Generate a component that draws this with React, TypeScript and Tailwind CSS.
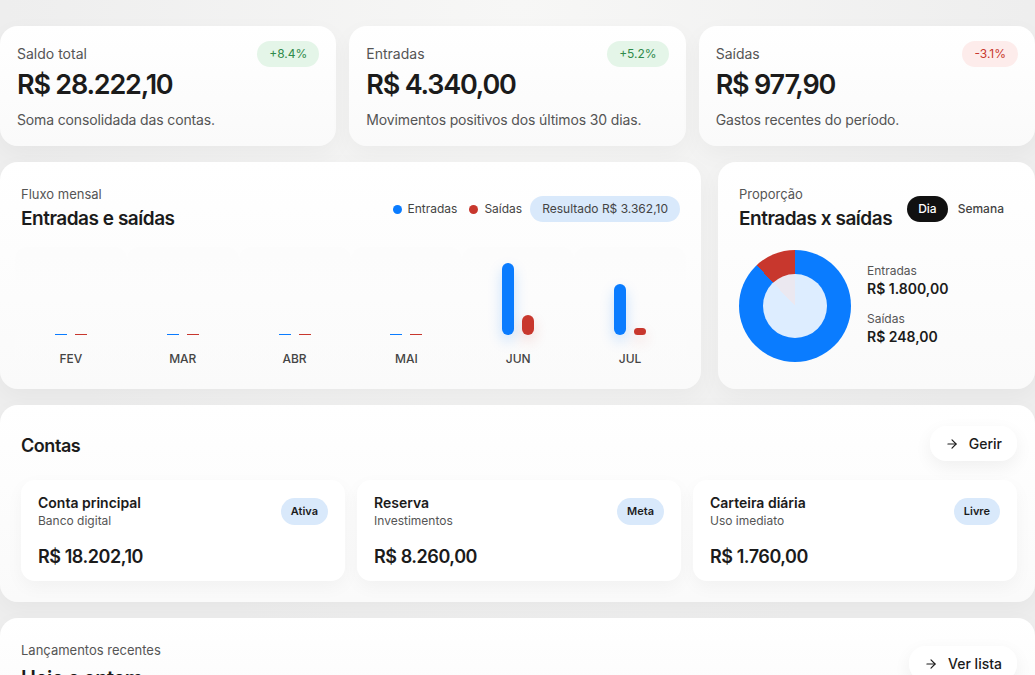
import { ArrowRight } from "lucide-react"

const font = { fontFamily: "Inter, 'Noto Sans', sans-serif" }

const stats = [
    { label: "Saldo total", value: "R$ 28.222,10", note: "Soma consolidada das contas.", badge: "+8.4%", up: true },
    { label: "Entradas", value: "R$ 4.340,00", note: "Movimentos positivos dos últimos 30 dias.", badge: "+5.2%", up: true },
    { label: "Saídas", value: "R$ 977,90", note: "Gastos recentes do período.", badge: "-3.1%", up: false },
]

const months = [
    { m: "FEV", inH: 0, outH: 0 },
    { m: "MAR", inH: 0, outH: 0 },
    { m: "ABR", inH: 0, outH: 0 },
    { m: "MAI", inH: 0, outH: 0 },
    { m: "JUN", inH: 72, outH: 20 },
    { m: "JUL", inH: 51, outH: 7 },
]

const accounts = [
    { name: "Conta principal", sub: "Banco digital", value: "R$ 18.202,10", tag: "Ativa" },
    { name: "Reserva", sub: "Investimentos", value: "R$ 8.260,00", tag: "Meta" },
    { name: "Carteira diária", sub: "Uso imediato", value: "R$ 1.760,00", tag: "Livre" },
]

function Bar({ h, color }: { h: number; color: "blue" | "red" }) {
    const base = color === "blue" ? "bg-[#0a7cff]" : "bg-[#c8372d]"
    if (h === 0) {
        return <div className={`h-[1.5px] w-3 ${base}`} />
    }
    return (
        <div
            className={`w-3 rounded-full ${base} ${color === "blue" ? "shadow-[0_6px_14px_rgba(10,124,255,0.22)]" : "shadow-[0_6px_14px_rgba(200,55,45,0.18)]"}`}
            style={{ height: h }}
        />
    )
}

export default function App() {
    return (
        <div
            className="min-h-screen w-[1035px] overflow-hidden bg-[#eeeeee] bg-[radial-gradient(ellipse_at_top,#f7f7f6_0%,#eeeeee_70%)] text-[#1b1b1b]"
            style={font}
        >
            <div className="flex flex-col gap-4 pt-[26px]">
                {/* stat cards */}
                <div className="grid grid-cols-3 gap-[13px]">
                    {stats.map((s) => (
                        <div
                            key={s.label}
                            className="h-[120px] rounded-[18px] bg-gradient-to-b from-white to-[#fafafa] px-[17px] pt-[15px] shadow-[0_8px_24px_rgba(0,0,0,0.04)]"
                        >
                            <div className="flex items-start justify-between">
                                <span className="mt-[3px] text-sm text-[#555]">{s.label}</span>
                                <span
                                    className={`rounded-full px-3 py-[5px] text-xs ${s.up ? "bg-[#e4f5e8] text-[#2f8a4a]" : "bg-[#fdeceb] text-[#c8372d]"}`}
                                >
                                    {s.badge}
                                </span>
                            </div>
                            <div className="mt-[4px] text-[27px] font-semibold leading-none tracking-[-0.045em]">{s.value}</div>
                            <div className="mt-[12px] text-sm tracking-[-0.01em] text-[#555]">{s.note}</div>
                        </div>
                    ))}
                </div>

                {/* charts */}
                <div className="grid grid-cols-[701px_1fr] gap-[17px]">
                    <div className="h-[227px] rounded-[18px] bg-gradient-to-b from-white to-[#fafafa] px-[21px] pt-[23px] shadow-[0_8px_24px_rgba(0,0,0,0.04)]">
                        <div className="flex items-start justify-between">
                            <div>
                                <div className="text-[13px] text-[#555]">Fluxo mensal</div>
                                <div className="text-[19px] font-semibold tracking-tight">Entradas e saídas</div>
                            </div>
                            <div className="mt-[11px] flex items-center gap-2 text-xs text-[#444]">
                                <span className="flex items-center gap-[6px]">
                                    <span className="size-[9px] rounded-full bg-[#0a7cff]" />
                                    Entradas
                                </span>
                                <span className="ml-1 flex items-center gap-[6px]">
                                    <span className="size-[9px] rounded-full bg-[#c8372d]" />
                                    Saídas
                                </span>
                                <span className="rounded-full bg-[#d9e9fb] px-3 py-[5px] text-[#444]">
                                    Resultado R$ 3.362,10
                                </span>
                            </div>
                        </div>
                        <div className="-mx-[6px] mt-[14px] grid grid-cols-6">
                            {months.map((c) => (
                                <div key={c.m} className="flex h-[128px] flex-col items-center rounded-xl bg-gradient-to-b from-[#fcfcfc] to-transparent">
                                    <div className="flex h-[88px] items-end gap-2">
                                        <Bar h={c.inH} color="blue" />
                                        <Bar h={c.outH} color="red" />
                                    </div>
                                    <div className="mt-[16px] text-xs font-medium text-[#444]">{c.m}</div>
                                </div>
                            ))}
                        </div>
                    </div>

                    <div className="h-[227px] rounded-[18px] bg-gradient-to-b from-white to-[#fafafa] px-[21px] pt-[23px] shadow-[0_8px_24px_rgba(0,0,0,0.04)]">
                        <div className="flex items-start gap-[15px]">
                            <div>
                                <div className="text-[13px] text-[#555]">Proporção</div>
                                <div className="text-[19px] font-semibold tracking-tight">Entradas x saídas</div>
                            </div>
                            <div className="mt-[11px] flex items-center gap-[10px] text-xs font-medium">
                                <span className="rounded-full bg-[#111] px-[11px] py-[5px] text-white">Dia</span>
                                <span className="text-[#444]">Semana</span>
                            </div>
                        </div>
                        <div className="mt-[17px] flex items-center gap-4">
                            <div className="flex size-[112px] items-center justify-center rounded-full bg-[conic-gradient(#0a7cff_0_88%,#c8372d_88%_100%)]">
                                <div className="size-[64px] rounded-full bg-[#eef5ff]/[0.93]" />
                            </div>
                            <div className="-mt-[2px] flex flex-col">
                                <span className="text-xs text-[#555]">Entradas</span>
                                <span className="text-sm font-semibold">R$ 1.800,00</span>
                                <span className="mt-[12px] text-xs text-[#555]">Saídas</span>
                                <span className="text-sm font-semibold">R$ 248,00</span>
                            </div>
                        </div>
                    </div>
                </div>

                {/* accounts */}
                <div className="h-[197px] rounded-[18px] bg-gradient-to-b from-white to-[#fafafa] pl-[21px] pr-[18px] pt-[21px] shadow-[0_8px_24px_rgba(0,0,0,0.04)]">
                    <div className="flex items-center justify-between">
                        <div className="mt-[4px] text-lg font-semibold tracking-tight">Contas</div>
                        <button className="flex h-[35px] items-center gap-[10px] rounded-2xl bg-white px-[15px] text-sm font-medium shadow-[0_6px_18px_rgba(0,0,0,0.06)]">
                            <ArrowRight className="size-[14px]" strokeWidth={2} />
                            Gerir
                        </button>
                    </div>
                    <div className="mt-[19px] grid grid-cols-3 gap-3">
                        {accounts.map((a) => (
                            <div key={a.name} className="h-[101px] rounded-[14px] bg-white px-[17px] pt-[13px] shadow-[0_6px_18px_rgba(0,0,0,0.04)]">
                                <div className="flex items-start justify-between">
                                    <div>
                                        <div className="text-sm font-semibold">{a.name}</div>
                                        <div className="text-xs text-[#555]">{a.sub}</div>
                                    </div>
                                    <span className="mt-[5px] rounded-full bg-[#d9e9fb] px-[10px] py-[5px] text-[11px] font-semibold">
                                        {a.tag}
                                    </span>
                                </div>
                                <div className="mt-[14px] text-lg font-semibold tracking-tight">{a.value}</div>
                            </div>
                        ))}
                    </div>
                </div>

                {/* recent */}
                <div className="h-[120px] rounded-[18px] bg-gradient-to-b from-white to-[#fafafa] pl-[21px] pr-[18px] pt-[23px] shadow-[0_8px_24px_rgba(0,0,0,0.04)]">
                    <div className="flex items-start justify-between">
                        <div>
                            <div className="text-[13px] text-[#555]">Lançamentos recentes</div>
                            <div className="mt-[3px] text-xl font-semibold tracking-tight">Hoje e ontem</div>
                        </div>
                        <button className="mt-[5px] flex h-[35px] items-center gap-[10px] rounded-2xl bg-white px-[15px] text-sm font-medium shadow-[0_6px_18px_rgba(0,0,0,0.06)]">
                            <ArrowRight className="size-[14px]" strokeWidth={2} />
                            Ver lista
                        </button>
                    </div>
                </div>
            </div>
        </div>
    )
}
